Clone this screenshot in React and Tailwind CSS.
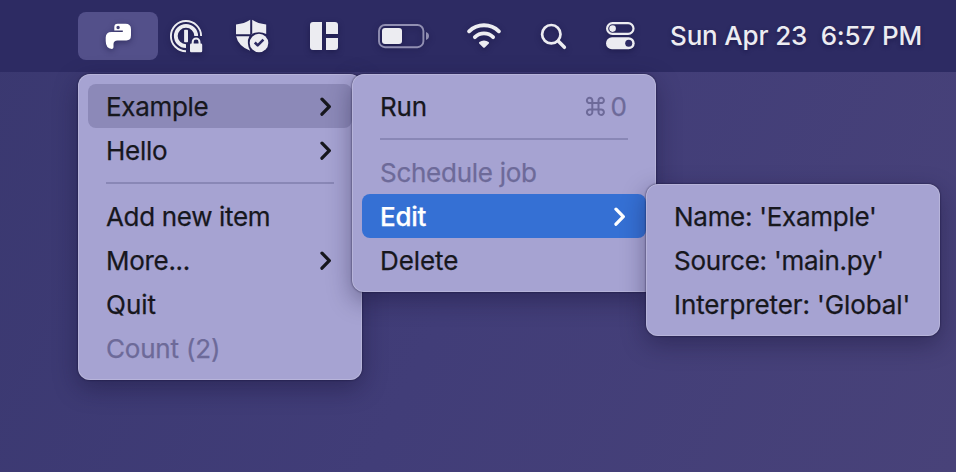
import React from "react";

const ICON = "block shrink-0 drop-shadow-[0_2px_3px_rgba(10,8,50,0.45)]";

function PythonIcon() {
  return (
    <svg className={ICON} width="30" height="30" viewBox="104 21 30 30">
      <path
        fill="#fff"
        fillRule="evenodd"
        d="M114.3 30.6V27.2Q114.3 23.8 117.6 23.8H125.5Q131 23.8 131 29.3V35.2Q131 40.4 126.4 40.4H117.6Q113.6 40.6 113.5 44V47.2Q113.4 48.9 111.8 48.9Q105.7 48.4 105.7 41V37.6Q105.7 32 111.6 32H122.8V30.6ZM118.1 25.8A1.7 1.7 0 1 0 118.1 29.2A1.7 1.7 0 1 0 118.1 25.8Z"
      />
    </svg>
  );
}

function PasswordLockIcon() {
  return (
    <svg className={ICON} width="36" height="36" viewBox="168 18 36 36">
      <g fill="none" stroke="#ececf1">
        <path strokeWidth="1.9" d="M186 51.2A15.1 15.1 0 1 1 201.1 36" />
        <path strokeWidth="3.8" d="M186 46.2A10.2 10.2 0 1 1 196.2 36" />
      </g>
      <rect x="184.1" y="29.8" width="3.9" height="12.4" rx="0.7" fill="#ececf1" />
      <path
        fill="none"
        stroke="#ececf1"
        strokeWidth="2"
        d="M192.7 44V41.9A3.4 3.4 0 0 1 199.5 41.9V44"
      />
      <rect x="190" y="43.4" width="12.2" height="8.8" rx="1.3" fill="#ececf1" />
    </svg>
  );
}

function ShieldIcon() {
  return (
    <svg className={ICON} width="36" height="36" viewBox="234 18 36 36">
      <g fill="#ececf1">
        <path d="M250.2 19.8V34.2H236V24.4Q244.4 23.8 250.2 19.8Z" />
        <path d="M252.2 19.8V34.2H250.9Q254.6 32.2 259 32.2Q263 32.2 266.2 34V24.4Q258 23.8 252.2 19.8Z" />
        <path d="M236.1 36.2H249.4Q247.6 39.2 247.9 43.2Q248.2 47.7 250.2 50.8Q238.2 46 236.1 36.2Z" />
        <circle cx="259" cy="43" r="9.3" />
      </g>
      <path
        fill="none"
        stroke="#2d2b63"
        strokeWidth="2.6"
        strokeLinejoin="round"
        d="M254.8 42.5L257.7 45.4L263.4 39.7"
      />
    </svg>
  );
}

function TilesIcon() {
  return (
    <svg className={ICON} width="32" height="32" viewBox="308 20 32 32">
      <g fill="#ececf1">
        <path d="M313 22H322V50H313Q310 50 310 47V25Q310 22 313 22Z" />
        <path d="M326 22H335Q338 22 338 25V34H326Z" />
        <path d="M326 38H338V47Q338 50 335 50H326Z" />
      </g>
    </svg>
  );
}

function BatteryIcon() {
  return (
    <svg className={ICON} width="54" height="28" viewBox="376 22 54 28">
      <rect x="379" y="25" width="44.4" height="22.2" rx="6" fill="none" stroke="#918fb2" strokeWidth="1.9" />
      <rect x="382" y="28" width="20" height="16" rx="3" fill="#ececf1" />
      <path fill="#918fb2" d="M426 32Q429 33.2 429 36Q429 38.8 426 40Z" />
    </svg>
  );
}

function WifiIcon() {
  return (
    <svg className={ICON} width="38" height="32" viewBox="465 20 38 32">
      <g fill="none" stroke="#ececf1" strokeWidth="3.9" strokeLinecap="round">
        <path d="M469.1 31.3A21.4 21.4 0 0 1 498.9 31.3" />
        <path d="M474.9 37.1A13.1 13.1 0 0 1 493.1 37.1" />
      </g>
      <path
        fill="#ececf1"
        d="M484 40.4Q486.7 40.4 488.6 42Q489.5 42.8 488.6 43.7L484.8 47.5Q484 48.2 483.2 47.5L479.4 43.7Q478.5 42.8 479.4 42Q481.3 40.4 484 40.4Z"
      />
    </svg>
  );
}

function SearchIcon() {
  return (
    <svg className={ICON} width="30" height="30" viewBox="539 21 30 30">
      <circle cx="551.3" cy="34.2" r="9.2" fill="none" stroke="#ececf1" strokeWidth="2.7" />
      <path d="M558.2 41.1L564.4 47.3" stroke="#ececf1" strokeWidth="3.5" strokeLinecap="round" />
    </svg>
  );
}

function ControlCenterIcon() {
  return (
    <svg className={ICON} width="32" height="32" viewBox="604 20 32 32">
      <rect x="607.1" y="23.1" width="26.4" height="10.8" rx="5.4" fill="none" stroke="#ececf1" strokeWidth="2.2" />
      <circle cx="612.6" cy="28.6" r="3.3" fill="#ececf1" />
      <rect x="606" y="37.2" width="28.7" height="12" rx="6" fill="#ececf1" />
      <circle cx="628.7" cy="43.2" r="3.5" fill="#2d2b63" />
    </svg>
  );
}

function Chevron() {
  return (
    <div className="mr-[20px] pt-[2px]">
      <svg className="block shrink-0" width="12" height="20" viewBox="0 0 12 20" fill="none" stroke="currentColor">
        <path d="M2 2.2L9.3 9.7L2 17.2" strokeWidth="3.3" strokeLinecap="round" strokeLinejoin="round" />
      </svg>
    </div>
  );
}

function CommandGlyph() {
  return (
    <svg className="block shrink-0" width="22" height="22" viewBox="0 0 22 22" fill="none" stroke="currentColor">
      <path
        strokeWidth="2"
        d="M8.3 8.1H14.5V14.5H8.3ZM8.3 8.1H5.9A2.7 2.7 0 1 1 8.3 5.5ZM14.5 8.1V5.5A2.7 2.7 0 1 1 16.9 8.1ZM14.5 14.5H16.9A2.7 2.7 0 1 1 14.5 17.1ZM8.3 14.5V17.1A2.7 2.7 0 1 1 5.9 14.5Z"
      />
    </svg>
  );
}

function Menu({ className, children }) {
  return (
    <div
      className={`absolute rounded-[12px] bg-[#a6a3d2] py-[10px] shadow-[inset_0_0_0_1px_rgba(205,202,228,0.45),0_0_2px_rgba(15,12,45,0.85),0_8px_24px_rgba(20,16,50,0.4)] ${className}`}
    >
      {children}
    </div>
  );
}

function Item({ label, spacing = "tracking-[-0.24px]", tone = "text-[#17171d]", bg = "", end = null }) {
  return (
    <div className={`mx-[10px] flex h-11 items-center justify-between rounded-[8px] pl-[18px] ${bg} ${tone}`}>
      <span className={`whitespace-pre pt-[2px] leading-[44px] [-webkit-text-stroke:0.25px_currentColor] ${spacing}`}>
        {label}
      </span>
      {end}
    </div>
  );
}

function Separator() {
  return (
    <div className="flex h-[22px] items-center px-7">
      <div className="h-[2px] w-full bg-[#8987b6]" />
    </div>
  );
}

export default function App() {
  return (
    <div className="relative h-[472px] w-[956px] overflow-hidden bg-linear-[115deg] from-[#3a3870] via-[#413d78] to-[#484279] font-[Inter,'Liberation_Sans',sans-serif] text-[26px]">
      <div className="flex h-[72px] items-center bg-[#2d2b63] pl-[78px]">
        <div className="flex h-12 w-20 items-center rounded-[8px] bg-[#53508a] pl-[26px]">
          <PythonIcon />
        </div>
        <div className="ml-[10px]"><PasswordLockIcon /></div>
        <div className="ml-[30px]"><ShieldIcon /></div>
        <div className="ml-[38px]"><TilesIcon /></div>
        <div className="ml-[36px]"><BatteryIcon /></div>
        <div className="ml-[35px]"><WifiIcon /></div>
        <div className="ml-[36px]"><SearchIcon /></div>
        <div className="ml-[35px]"><ControlCenterIcon /></div>
        <div className="ml-[34px] whitespace-pre pb-[2px] font-medium tracking-[-0.17px] text-[#ececf1] [text-shadow:0_2px_4px_rgba(10,8,50,0.4)]">
          Sun Apr 23  6:57 PM
        </div>
      </div>

      <Menu className="left-[78px] top-[74px] w-[284px]">
        <Item label="Example" bg="bg-[#8c89b8]" spacing="tracking-[-0.3px]" end={<Chevron />} />
        <Item label="Hello" end={<Chevron />} />
        <Separator />
        <Item label="Add new item" spacing="tracking-[-0.33px]" />
        <Item label="More..." spacing="tracking-[-0.3px]" end={<Chevron />} />
        <Item label="Quit" spacing="tracking-normal" />
        <Item label="Count (2)" tone="text-[#6d6a99]" spacing="tracking-[-0.2px]" />
      </Menu>

      <Menu className="left-[352px] top-[74px] w-[304px]">
        <Item
          label="Run"
          end={
            <div className="mr-[19px] flex items-center gap-[5px] text-[#6d6a99]">
              <CommandGlyph />
              <span className="[-webkit-text-stroke:0.25px_currentColor]">0</span>
            </div>
          }
        />
        <Separator />
        <Item label="Schedule job" tone="text-[#6d6a99]" spacing="tracking-[-0.27px]" />
        <Item label="Edit" bg="bg-[#3570d4]" tone="text-white font-medium" end={<Chevron />} />
        <Item label="Delete" spacing="tracking-[-0.1px]" />
      </Menu>

      <Menu className="left-[646px] top-[184px] w-[294px]">
        <Item label="Name: 'Example'" spacing="tracking-[-0.28px]" />
        <Item label="Source: 'main.py'" />
        <Item label="Interpreter: 'Global'" spacing="tracking-[-0.1px]" />
      </Menu>
    </div>
  );
}
